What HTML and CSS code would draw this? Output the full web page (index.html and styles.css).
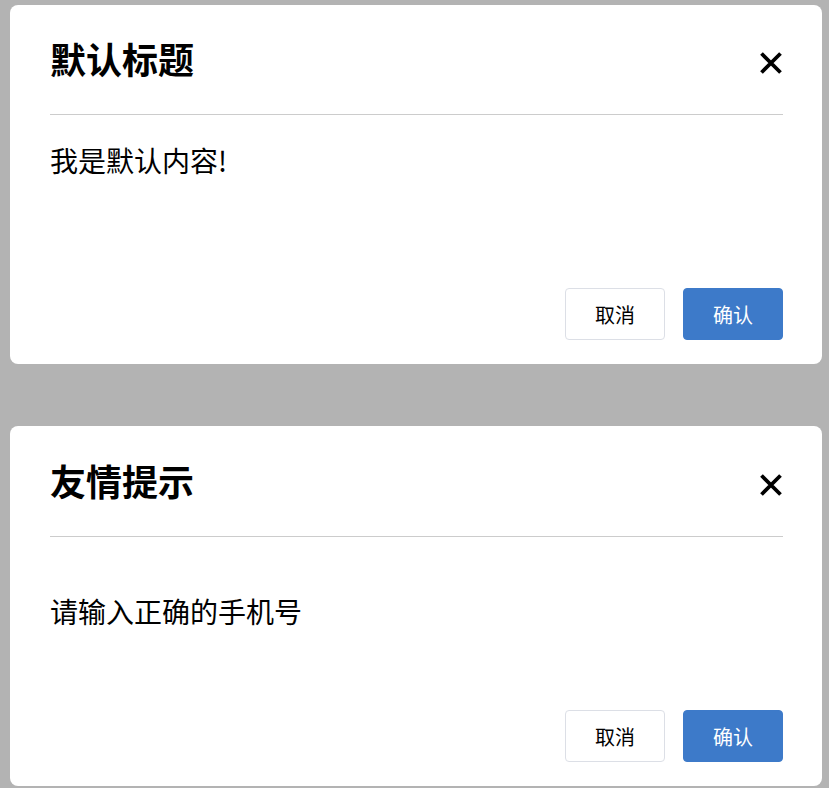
FILE: index.html
```html
<!DOCTYPE html>
<html lang="zh-CN">
<head>
<meta charset="utf-8">
<title>Dialog</title>
<link rel="stylesheet" href="styles.css">
</head>
<body>
<div class="page">
  <div class="dialog">
    <div class="dialog-header">
      <h2 class="dialog-title">默认标题</h2>
      <button class="dialog-close" aria-label="关闭">
        <svg width="24" height="24" viewBox="0 0 24 24"><path d="M2.5 2.5 L21.5 21.5 M21.5 2.5 L2.5 21.5" stroke="#000" stroke-width="3.8" fill="none"/></svg>
      </button>
    </div>
    <div class="dialog-body">
      <p class="dialog-text">我是默认内容!</p>
    </div>
    <div class="dialog-footer">
      <button class="btn btn-cancel">取消</button>
      <button class="btn btn-confirm">确认</button>
    </div>
  </div>

  <div class="dialog dialog-second">
    <div class="dialog-header">
      <h2 class="dialog-title">友情提示</h2>
      <button class="dialog-close" aria-label="关闭">
        <svg width="24" height="24" viewBox="0 0 24 24"><path d="M2.5 2.5 L21.5 21.5 M21.5 2.5 L2.5 21.5" stroke="#000" stroke-width="3.8" fill="none"/></svg>
      </button>
    </div>
    <div class="dialog-body dialog-body-center">
      <p class="dialog-text">请输入正确的手机号</p>
    </div>
    <div class="dialog-footer">
      <button class="btn btn-cancel">取消</button>
      <button class="btn btn-confirm">确认</button>
    </div>
  </div>
</div>
</body>
</html>
```

FILE: styles.css
```css
html, body {
  margin: 0;
  padding: 0;
  background: #b3b3b3;
}

body {
  font-family: "Noto Sans CJK SC", "Noto Sans", sans-serif;
  color: #000;
}

.page {
  padding: 5px 7px 0 10px;
  display: flex;
  flex-direction: column;
  gap: 62px;
}

.dialog {
  width: 812px;
  height: 359px;
  box-sizing: border-box;
  background: #fff;
  border-radius: 8px;
  padding: 31px 39px 24px 40px;
  display: flex;
  flex-direction: column;
}

.dialog-second {
  height: 360px;
  padding-top: 32px;
}

.dialog-header {
  display: flex;
  align-items: center;
  justify-content: space-between;
  height: 54px;
  padding-bottom: 24px;
  border-bottom: 1px solid #cccccc;
}

.dialog-title {
  margin: 0 0 9px 0;
  font-size: 36px;
  font-weight: 700;
  line-height: 45px;
}

.dialog-close {
  width: 24px;
  height: 24px;
  padding: 0;
  border: none;
  background: none;
  display: flex;
  cursor: pointer;
}

.dialog-body {
  flex: 1;
  padding-top: 25px;
}

.dialog-body-center {
  padding-top: 54px;
}

.dialog-text {
  margin: 0;
  font-size: 28px;
  line-height: 40px;
}

.dialog-footer {
  display: flex;
  justify-content: flex-end;
  gap: 18px;
}

.btn {
  width: 100px;
  height: 52px;
  box-sizing: border-box;
  border-radius: 4px;
  font-family: "Noto Sans CJK SC", "Noto Sans", sans-serif;
  font-size: 20px;
  cursor: pointer;
}

.btn-cancel {
  background: #fff;
  border: 1px solid #dcdfe6;
  color: #000;
}

.btn-confirm {
  background: #3d7ac9;
  border: 1px solid #3d7ac9;
  color: #fff;
}
```
